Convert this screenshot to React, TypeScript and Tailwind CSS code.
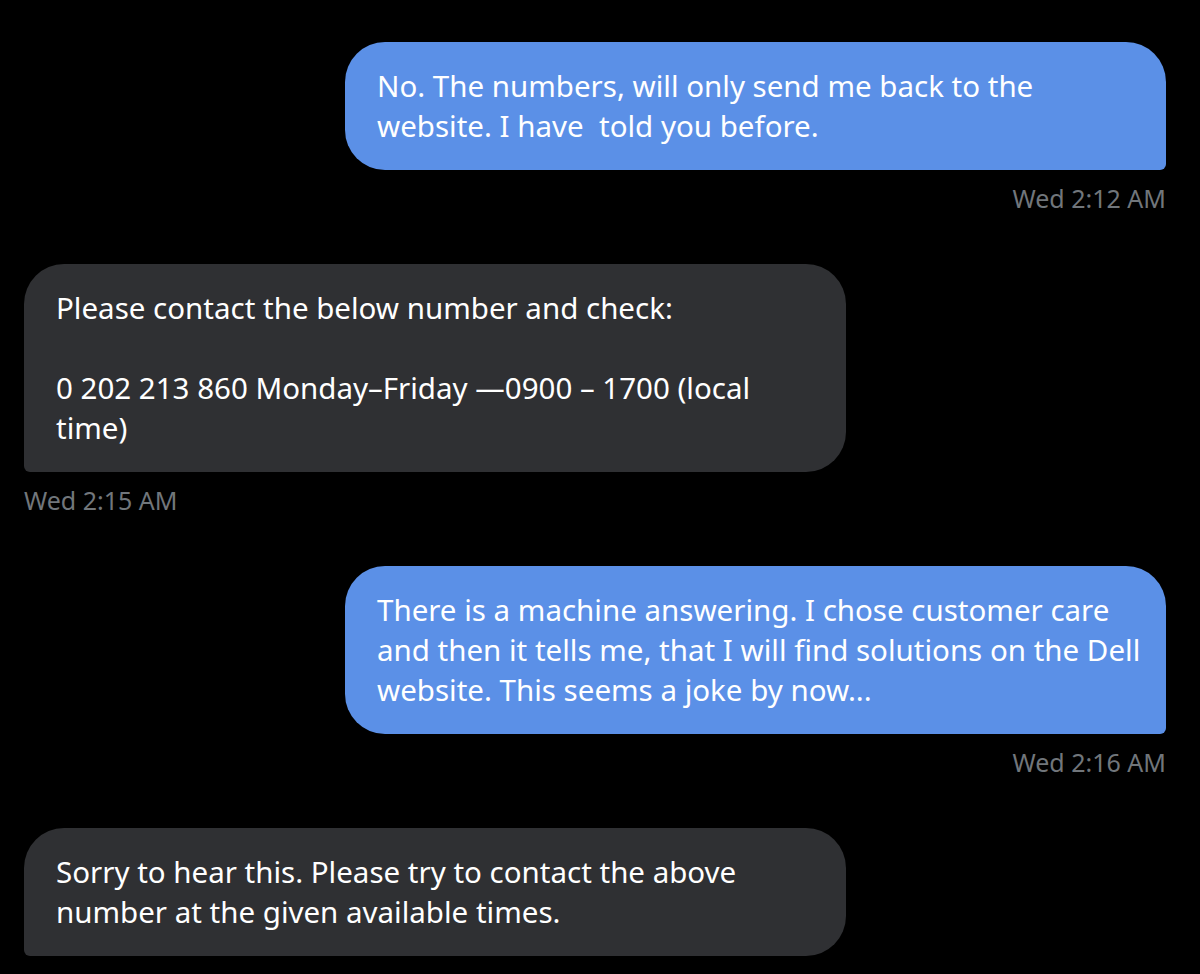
import React from 'react';

type Message = {
  from: 'me' | 'them';
  text: string;
  time: string;
};

const messages: Message[] = [
  {
    from: 'me',
    text: 'No. The numbers, will only send me back to the website. I have  told you before.',
    time: 'Wed 2:12 AM',
  },
  {
    from: 'them',
    text: 'Please contact the below number and check:\n\n0 202 213 860 Monday–Friday —0900 – 1700 (local time)',
    time: 'Wed 2:15 AM',
  },
  {
    from: 'me',
    text: 'There is a machine answering. I chose customer care and then it tells me, that I will find solutions on the Dell website. This seems a joke by now...',
    time: 'Wed 2:16 AM',
  },
  {
    from: 'them',
    text: 'Sorry to hear this. Please try to contact the above number at the given available times.',
    time: '',
  },
];

function Bubble({ item }: { item: Message }) {
  const mine = item.from === 'me';

  return (
    <div className={mine ? 'flex flex-col items-end' : 'flex flex-col items-start'}>
      <div
        className={
          mine
            ? 'w-[821px] rounded-[40px] rounded-br-[6px] bg-[#5b90e7] pt-6 pb-6 pl-8 pr-5 text-white'
            : 'w-[822px] rounded-[40px] rounded-bl-[6px] bg-[#2f3033] pt-6 pb-6 pl-8 pr-5 text-white'
        }
      >
        <p className="m-0 whitespace-pre-wrap text-[29.5px] leading-10">{item.text}</p>
      </div>
      {item.time && (
        <p className="m-0 mt-3 text-[25px] leading-8 text-[#71767b]">{item.time}</p>
      )}
    </div>
  );
}

export default function App() {
  return (
    <div
      className="min-h-screen bg-black pt-[42px] pl-6 pr-[34px]"
      style={{ fontFamily: '"Noto Sans", "Open Sans", sans-serif' }}
    >
      <div className="flex flex-col gap-[50px]">
        {messages.map((item, index) => (
          <Bubble key={index} item={item} />
        ))}
      </div>
    </div>
  );
}
